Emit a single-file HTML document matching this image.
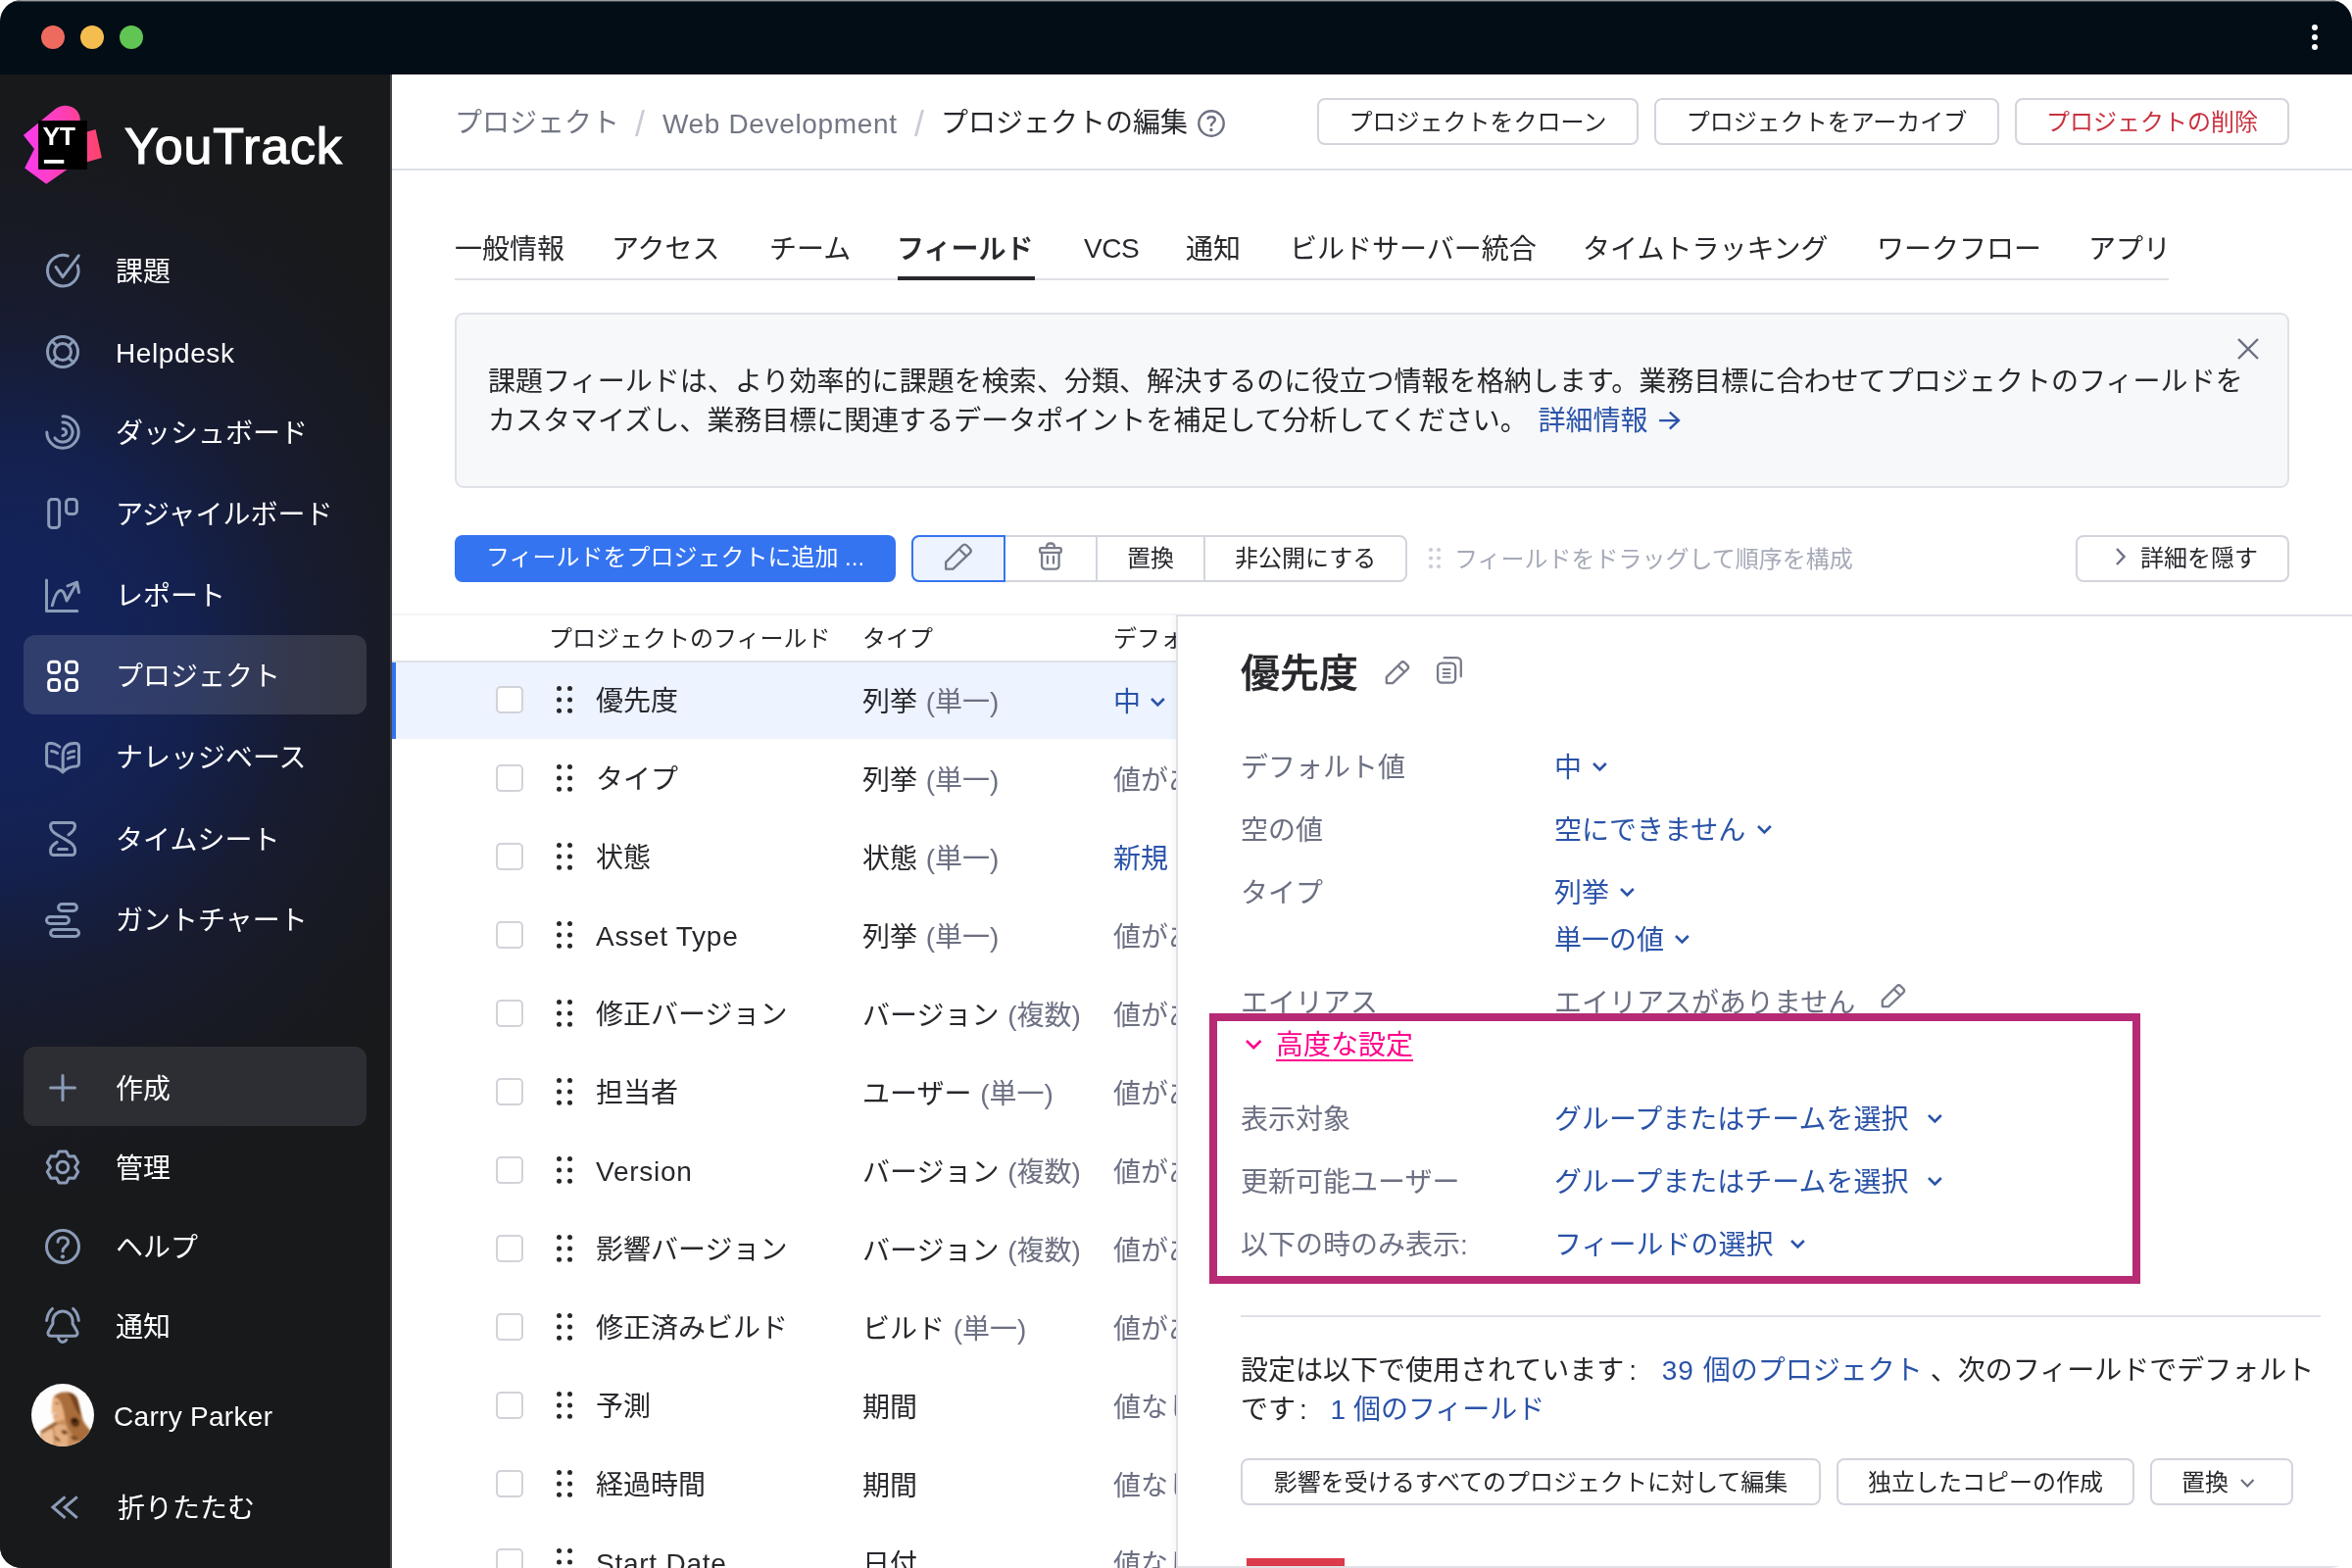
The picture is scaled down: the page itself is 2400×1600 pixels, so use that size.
<!DOCTYPE html>
<html lang="ja"><head><meta charset="utf-8"><title>YouTrack</title>
<style>
html,body{margin:0;padding:0;background:#fff}
body{width:2400px;height:1600px;overflow:hidden;position:relative;font-family:"Liberation Sans","Noto Sans CJK JP",sans-serif;color:#1f2326}
.win{position:absolute;left:0;top:0;width:2400px;height:1600px;border-radius:22px;overflow:hidden;background:#fff;will-change:transform}
.abs{position:absolute;box-sizing:content-box}
.t{position:absolute;white-space:nowrap;line-height:1}
.btn{text-align:center;white-space:nowrap;background:#fff}
svg{overflow:visible}
</style></head><body><div class="win">
<div class="abs" style="left:0;top:0;width:2400px;height:76px;background:#020d16"></div>
<div class="abs" style="left:0;top:0;width:2400px;height:2px;background:linear-gradient(#9a9da0 0,#9a9da0 1px,#3f454b 1px,#3f454b 2px)"></div>
<div class="abs" style="left:42px;top:26px;width:24px;height:24px;border-radius:50%;background:#ee6a5e"></div>
<div class="abs" style="left:82px;top:26px;width:24px;height:24px;border-radius:50%;background:#f5bd4f"></div>
<div class="abs" style="left:122px;top:26px;width:24px;height:24px;border-radius:50%;background:#61c554"></div>
<div class="abs" style="left:2359px;top:25px;width:6px;height:6px;border-radius:50%;background:#fff"></div>
<div class="abs" style="left:2359px;top:35px;width:6px;height:6px;border-radius:50%;background:#fff"></div>
<div class="abs" style="left:2359px;top:45px;width:6px;height:6px;border-radius:50%;background:#fff"></div>
<div class="abs" style="left:0;top:76px;width:398px;height:1524px;background:#18191b"></div>
<div class="abs" style="left:0;top:76px;width:398px;height:1524px;background:radial-gradient(ellipse 520px 560px at 0px 594px,#13235a 0%,#13235a 19%,#14214f 38%,#171c33 58%,#181a24 77%,#18191b 100%)"></div>
<div class="abs" style="left:398px;top:76px;width:2px;height:1524px;background:#45464c"></div>
<svg class="abs" style="left:14px;top:96px" width="100" height="100" viewBox="0 0 100 100" fill="none" ><defs><linearGradient id="lg" x1="10" y1="50" x2="90" y2="50" gradientUnits="userSpaceOnUse"><stop offset="0" stop-color="#fb3cf0"/><stop offset="0.55" stop-color="#fd3fae"/><stop offset="1" stop-color="#ff4468"/></linearGradient></defs>
<path d="M9.9 42.1 L41.5 15.9 Q47.5 11.6 53 11.8 Q60 12 64.5 17 Q67.8 21 67.8 27.1 L39 27.1 Z" fill="url(#lg)"/>
<path d="M9.9 42.1 L40 20 L40 76.8 L54.8 76.8 L33.2 91.8 L11.2 75.6 L21 56.1 Z" fill="url(#lg)"/>
<path d="M74 38.8 L83.5 36 L89.9 65.1 L74 69.5 Z" fill="url(#lg)"/>
<rect x="25.1" y="27.1" width="49.8" height="49.8" fill="#000"/>
<rect x="30.9" y="67" width="20.4" height="3.8" fill="#fff"/>
<text x="29.6" y="52" font-family='"Liberation Sans",sans-serif' font-weight="700" font-size="26.5" fill="#fff" letter-spacing="-0.5">YT</text></svg>
<div class="t" style="left:127px;top:116.5px;font-size:52px;color:#fff;letter-spacing:0.85px;line-height:64px;-webkit-text-stroke:1.2px #fff">YouTrack</div>
<div class="abs" style="left:24px;top:648px;width:350px;height:81px;border-radius:12px;background:rgba(255,255,255,0.125)"></div>
<div class="abs" style="left:24px;top:1068px;width:350px;height:81px;border-radius:12px;background:#2d2e33"></div>
<svg class="abs" style="left:34px;top:246px" width="60" height="60" viewBox="0 0 60 60" fill="none" ><g stroke="#8b9cb8" stroke-width="3" stroke-linecap="round" stroke-linejoin="round"><path d="M45.2 24.9 A15.8 15.8 0 1 1 35.2 15.1"/><path d="M23 26.4 L30 36.7 L46.3 14.9"/></g></svg>
<div class="t" style="left:118px;top:264.4px;font-size:28px;color:#fff;font-weight:400;">課題</div>
<svg class="abs" style="left:34px;top:329px" width="60" height="60" viewBox="0 0 60 60" fill="none" ><g stroke="#8b9cb8" stroke-width="3" stroke-linecap="round" stroke-linejoin="round"><circle cx="30" cy="30" r="15.5"/><circle cx="30" cy="30" r="8.5"/><path d="M19 19 L24 24 M41 19 L36 24 M19 41 L24 36 M41 41 L36 36"/></g></svg>
<div class="t" style="left:118px;top:346.5px;font-size:28px;color:#fff;font-weight:400;letter-spacing:0.6px">Helpdesk</div>
<svg class="abs" style="left:34px;top:411px" width="60" height="60" viewBox="0 0 60 60" fill="none" ><g stroke="#8b9cb8" stroke-width="3" stroke-linecap="round" stroke-linejoin="round"><path d="M30.00 13.80 A16.2 16.2 0 1 1 13.80 30.00"/><path d="M30.00 20.00 A10 10 0 1 1 21.91 35.88"/><path d="M30.00 26.40 A3.6 3.6 0 0 1 30.00 33.60"/></g></svg>
<div class="t" style="left:118px;top:429.4px;font-size:28px;color:#fff;font-weight:400;">ダッシュボード</div>
<svg class="abs" style="left:34px;top:494px" width="60" height="60" viewBox="0 0 60 60" fill="none" ><g stroke="#8b9cb8" stroke-width="3" stroke-linecap="round" stroke-linejoin="round"><rect x="15.7" y="15.5" width="10.9" height="29" rx="3.2"/><rect x="33.6" y="15.5" width="10.8" height="15" rx="3.2"/></g></svg>
<div class="t" style="left:118px;top:512.4px;font-size:28px;color:#fff;font-weight:400;">アジャイルボード</div>
<svg class="abs" style="left:34px;top:577px" width="60" height="60" viewBox="0 0 60 60" fill="none" ><g stroke="#8b9cb8" stroke-width="3" stroke-linecap="round" stroke-linejoin="round"><path d="M13.5 15.1 V46.5 H44.8"/><path d="M19.3 40.8 C22 31 25 25.6 27.9 25.6 C31 25.6 32.5 31 34.1 36 L44.6 17.2"/><path d="M35 20.9 L44.6 17.2 L46.5 27.6"/></g></svg>
<div class="t" style="left:118px;top:595.4px;font-size:28px;color:#fff;font-weight:400;">レポート</div>
<svg class="abs" style="left:34px;top:659px" width="60" height="60" viewBox="0 0 60 60" fill="none" ><g stroke="#fff" stroke-width="3" stroke-linecap="round" stroke-linejoin="round"><rect x="15.7" y="16.2" width="10.9" height="11.2" rx="3.4"/><rect x="15.7" y="34.4" width="10.9" height="11.2" rx="3.4"/><rect x="33.6" y="16.2" width="10.9" height="11.2" rx="3.4"/><rect x="33.6" y="34.4" width="10.9" height="11.2" rx="3.4"/></g></svg>
<div class="t" style="left:118px;top:677.4px;font-size:28px;color:#fff;font-weight:400;">プロジェクト</div>
<svg class="abs" style="left:34px;top:742px" width="60" height="60" viewBox="0 0 60 60" fill="none" ><g stroke="#8b9cb8" stroke-width="3" stroke-linecap="round" stroke-linejoin="round"><path d="M26.8 20.1 C24 18 21.5 16.5 18.4 16.5 H16.6 A3 3 0 0 0 13.6 19.5 V37 A3 3 0 0 0 16.6 40 C21 40 25.5 41.5 30 45.9 C34.5 41.5 39 40 43.5 40 A3 3 0 0 0 46.5 37 V19.5 A3 3 0 0 0 43.5 16.5 H41.6 C34.5 16.5 30.2 21 30.2 27.5 V45"/><path d="M18.6 24.5 C21 24.7 23 25.4 24.5 26.5 M35.4 26.5 C37 25.4 39 24.7 41.6 24.5 M35.4 32.1 C37 31 39 30.4 41.6 30.2"/></g></svg>
<div class="t" style="left:118px;top:760.4px;font-size:28px;color:#fff;font-weight:400;">ナレッジベース</div>
<svg class="abs" style="left:34px;top:825px" width="60" height="60" viewBox="0 0 60 60" fill="none" ><g stroke="#8b9cb8" stroke-width="3" stroke-linecap="round" stroke-linejoin="round"><path d="M36 26.8 C40 24 42.5 21.5 42.5 18 V17.5 A3 3 0 0 0 39.5 14.5 H20.6 A3 3 0 0 0 17.6 17.5 V18 C17.6 24 24 26.5 30 30 C36 33.5 42.5 36.5 42.5 42.5 V44.6 A3 3 0 0 1 39.5 47.6 H20.6 A3 3 0 0 1 17.6 44.6 V42.5 C17.6 39 20 36.8 24.1 34.4"/><path d="M25.6 41.5 H34.4"/></g></svg>
<div class="t" style="left:118px;top:844.4px;font-size:28px;color:#fff;font-weight:400;">タイムシート</div>
<svg class="abs" style="left:34px;top:908px" width="60" height="60" viewBox="0 0 60 60" fill="none" ><g stroke="#8b9cb8" stroke-width="3" stroke-linecap="round" stroke-linejoin="round"><rect x="25.6" y="14.5" width="18.8" height="7" rx="3.5"/><rect x="13.5" y="27.5" width="22.9" height="7" rx="3.5"/><rect x="17.6" y="40.5" width="28.9" height="7" rx="3.5"/></g></svg>
<div class="t" style="left:118px;top:926.4px;font-size:28px;color:#fff;font-weight:400;">ガントチャート</div>
<svg class="abs" style="left:34px;top:1078px" width="60" height="60" viewBox="0 0 60 60" fill="none" ><g stroke="#8b9cb8" stroke-width="3" stroke-linecap="round" stroke-linejoin="round"><path d="M17.6 32 H42.5 M30 19.5 V44.4"/></g></svg>
<div class="t" style="left:118px;top:1097.5px;font-size:28px;color:#fff;font-weight:400;">作成</div>
<svg class="abs" style="left:34px;top:1161px" width="60" height="60" viewBox="0 0 60 60" fill="none" ><g stroke="#8b9cb8" stroke-width="3" stroke-linecap="round" stroke-linejoin="round"><path d="M26.31 14.02 L33.69 14.02 L36.30 19.09 L41.99 18.82 L45.68 25.21 L42.60 30.00 L45.68 34.79 L41.99 41.18 L36.30 40.91 L33.69 45.98 L26.31 45.98 L23.70 40.91 L18.01 41.18 L14.32 34.79 L17.40 30.00 L14.32 25.21 L18.01 18.82 L23.70 19.09 Z"/><circle cx="30" cy="30" r="5.8"/></g></svg>
<div class="t" style="left:118px;top:1179.3px;font-size:28px;color:#fff;font-weight:400;">管理</div>
<svg class="abs" style="left:34px;top:1242px" width="60" height="60" viewBox="0 0 60 60" fill="none" ><g stroke="#8b9cb8" stroke-width="3" stroke-linecap="round" stroke-linejoin="round"><circle cx="30" cy="30" r="16.5"/><path d="M25 25.3 C25 22.5 27 20.7 30 20.7 C33.3 20.7 35.6 22.6 35.6 25.2 C35.6 29.5 30 30 30 34.8"/><circle cx="30" cy="40.3" r="2.1" fill="#8b9cb8" stroke="none"/></g></svg>
<div class="t" style="left:118px;top:1259.9px;font-size:28px;color:#fff;font-weight:400;">ヘルプ</div>
<svg class="abs" style="left:34px;top:1322px" width="60" height="60" viewBox="0 0 60 60" fill="none" ><g stroke="#8b9cb8" stroke-width="3" stroke-linecap="round" stroke-linejoin="round"><path d="M19.9 28.7 V26 A10.1 10.1 0 0 1 40.1 26 V28.7 L44.6 36.6 A3 3 0 0 1 42 41.3 H18 A3 3 0 0 1 15.4 36.6 Z"/><path d="M25.3 42.5 C26 45.5 27.5 47.4 30 47.4 C31.8 47.4 33 46.6 33.7 45.2"/><path d="M13.6 25.4 C14.2 20.5 16 16.5 19.5 13.4 M40.6 13.4 C44 16.5 45.8 20.5 46.3 25.4"/></g></svg>
<div class="t" style="left:118px;top:1340.6px;font-size:28px;color:#fff;font-weight:400;">通知</div>
<svg class="abs" style="left:34px;top:1508px" width="60" height="60" viewBox="0 0 60 60" fill="none" ><g stroke="#8b9cb8" stroke-width="3" stroke-linecap="round" stroke-linejoin="round"><path d="M32.5 19.3 L19.9 30 L32.5 40.8 M44.8 19.3 L32.1 30 L44.8 40.8" stroke-linecap="butt" stroke-linejoin="miter"/></g></svg>
<div class="t" style="left:120px;top:1525.9px;font-size:28px;color:#fff;font-weight:400;">折りたたむ</div>
<svg class="abs" style="left:32px;top:1412px" width="64" height="64" viewBox="0 0 64 64" fill="none" ><defs><clipPath id="avc"><circle cx="32" cy="32" r="32"/></clipPath><filter id="avb" x="-10%" y="-10%" width="120%" height="120%"><feGaussianBlur stdDeviation="0.9"/></filter></defs>
<g clip-path="url(#avc)"><rect width="64" height="64" fill="#fefdfd"/>
<g filter="url(#avb)">
<path d="M9 48.5 C14 45 20 41.5 24 38.5 L30 36 L50 34 C54 40 58 45 61 48.5 L62 66 L10 66 Z" fill="#c98f5c"/>
<path d="M10.5 49 C13 47.5 17 46 21 46 C23 50 23 58 22.5 66 L12 66 Z" fill="#ecbd93"/>
<path d="M23 44 C27 41 31 41 35 43 C37 48 38 56 37 66 L24 66 C25 58 25 50 23 44 Z" fill="#e3ad80"/>
<path d="M22.4 14 C21 18 20.5 24 21 28 L20.3 30 L22.5 31.5 L22 35 C23 37.8 25 38.8 27.5 38.6 L35 36 L37 14 Z" fill="#e9b182"/>
<path d="M22.4 14 C26 9.5 31 8.2 36 8.6 C42 9 46 12 47.5 17 C50 25 51 32 53 38 C55 43 58.5 46 61 48.5 L57 60 C50 61 44 56 40.5 50 C37 44 34.5 38 33.5 32 C32.5 25 30.5 19 27.5 15.8 C26 14.2 24 13.8 22.4 14 Z" fill="#a96d3b"/>
<path d="M36 8.8 C42 9 46 12 47.5 17 C49 23 50 28 50.8 33 C47 30 44 24 42 18 C40.5 14 38.5 11 36 8.8 Z" fill="#74431d"/>
<path d="M40 36 C43 33 47 34 49 38 C50 42 47 45 44 44 C41 43 39 39 40 36 Z" fill="#5a3114"/>
<ellipse cx="44.3" cy="37.4" rx="2.3" ry="1.7" fill="#1d0d04"/>
<path d="M24.5 39 C19.5 42 14.5 45 9.5 48.5 L12 50.5 C17 47.5 22.5 44.5 27 41 Z" fill="#9b6537"/>
<path d="M30 48 C33 46 36 47 37 50 C36 53 32 53 30 48 Z M40 54 C43 52 47 53 48 57 C45 59 41 58 40 54 Z M23 53 C26 54 29 56 30 59 C27 59 24 57 23 53 Z" fill="#7f4d24"/>
<ellipse cx="26.2" cy="20" rx="1.5" ry="0.9" fill="#6b3d1c"/>
<path d="M22.5 30 L26 30.2 L25.5 31.6 L22.8 31.4 Z" fill="#fff"/><path d="M23 31.6 L26 31.6 L25 32.8 Z" fill="#6b3218"/>
</g></g></svg>
<div class="t" style="left:116px;top:1431.5px;font-size:28px;color:#fff;font-weight:400;letter-spacing:0.3px">Carry Parker</div>
<div class="t" style="left:464px;top:111.9px;font-size:28px;color:#737785;font-weight:400;">プロジェクト</div>
<div class="t" style="left:648px;top:109.0px;font-size:36px;color:#c9ccd5;font-weight:400;">/</div>
<div class="t" style="left:676px;top:113.0px;font-size:28px;color:#737785;font-weight:400;letter-spacing:0.65px">Web Development</div>
<div class="t" style="left:933px;top:109.0px;font-size:36px;color:#c9ccd5;font-weight:400;">/</div>
<div class="t" style="left:960px;top:111.9px;font-size:28px;color:#27282c;font-weight:400;">プロジェクトの編集</div>
<svg class="abs" style="left:1221px;top:111px" width="30" height="30" viewBox="0 0 30 30" fill="none" ><g stroke="#6c7082" stroke-width="2.4" stroke-linecap="round" stroke-linejoin="round"><circle cx="15" cy="15" r="12.7"/><path d="M11.6 9.9 C12 8.8 13.3 8.3 15 8.3 C17.4 8.3 18.8 9.6 18.8 11.3 C18.8 13.9 15 14.3 15 16.9"/><circle cx="14.9" cy="21.5" r="1.7" fill="#6c7082" stroke="none"/></g></svg>
<div class="abs btn" style="left:1344px;top:100px;width:324px;height:44px;border:2px solid #d3d5dd;border-radius:8px;font-size:24px;color:#27282c;line-height:46px;">プロジェクトをクローン</div>
<div class="abs btn" style="left:1688px;top:100px;width:348px;height:44px;border:2px solid #d3d5dd;border-radius:8px;font-size:24px;color:#27282c;line-height:46px;">プロジェクトをアーカイブ</div>
<div class="abs btn" style="left:2056px;top:100px;width:276px;height:44px;border:2px solid #d3d5dd;border-radius:8px;font-size:24px;color:#c8323f;line-height:46px;">プロジェクトの削除</div>
<div class="abs" style="left:400px;top:172px;width:2000px;height:2px;background:#dfe1e7"></div>
<div class="t" style="left:464px;top:240.9px;font-size:28px;color:#27282c;font-weight:400;">一般情報</div>
<div class="t" style="left:624px;top:240.9px;font-size:28px;color:#27282c;font-weight:400;">アクセス</div>
<div class="t" style="left:785px;top:240.9px;font-size:28px;color:#27282c;font-weight:400;">チーム</div>
<div class="t" style="left:915px;top:240.9px;font-size:28px;color:#27282c;font-weight:500;-webkit-text-stroke:0.35px #27282c">フィールド</div>
<div class="t" style="left:1105px;top:240.0px;font-size:28px;color:#27282c;font-weight:400;letter-spacing:-0.5px;margin-left:1px">VCS</div>
<div class="t" style="left:1210px;top:240.9px;font-size:28px;color:#27282c;font-weight:400;">通知</div>
<div class="t" style="left:1316px;top:240.9px;font-size:28px;color:#27282c;font-weight:400;">ビルドサーバー統合</div>
<div class="t" style="left:1615px;top:240.9px;font-size:28px;color:#27282c;font-weight:400;">タイムトラッキング</div>
<div class="t" style="left:1915px;top:240.9px;font-size:28px;color:#27282c;font-weight:400;">ワークフロー</div>
<div class="t" style="left:2131px;top:240.9px;font-size:28px;color:#27282c;font-weight:400;">アプリ</div>
<div class="abs" style="left:464px;top:284px;width:1749px;height:2px;background:#dfe1e7"></div>
<div class="abs" style="left:916px;top:282px;width:140px;height:4px;background:#27282c"></div>
<div class="abs" style="left:464px;top:319px;width:1868px;height:175px;border:2px solid #dfe1e7;border-radius:9px;background:#f7f8fa"></div>
<div class="t" style="left:498px;top:375.8px;font-size:28px;color:#27282c;font-weight:400;"><span style="letter-spacing:0.05px">課題フィールドは、より効率的に課題を検索、分類、解決するのに役立つ情報を格納します。業務目標に合わせてプロジェクトのフィールドを</span></div>
<div class="t" style="left:498px;top:415.8px;font-size:28px;color:#27282c;font-weight:400;">カスタマイズし、業務目標に関連するデータポイントを補足して分析してください。 <span style="color:#2a53a8;margin-left:3px">詳細情報</span></div>
<svg class="abs" style="left:1690px;top:418px" width="26" height="22" viewBox="0 0 26 22" fill="none" ><path d="M3.1 11.1 H22.6 M13.8 2.7 L23 11.1 L13.8 19.5" stroke="#2a53a8" stroke-width="2.4" stroke-linejoin="miter"/></svg>
<svg class="abs" style="left:2280px;top:342px" width="28" height="28" viewBox="0 0 28 28" fill="none" ><path d="M4 4 L24 24 M24 4 L4 24" stroke="#6c7082" stroke-width="2.4"/></svg>
<div class="abs btn" style="left:464px;top:546px;width:450px;height:48px;border-radius:8px;background:#3574f0;color:#fff;font-size:24px;line-height:46px">フィールドをプロジェクトに追加 ...</div>
<div class="abs" style="left:930px;top:546px;width:502px;height:44px;border:2px solid #d3d5dd;border-radius:8px;background:#fff"></div>
<div class="abs" style="left:930px;top:546px;width:92px;height:44px;border:2px solid #3574f0;border-radius:8px 0 0 8px;background:#edf3ff"></div>
<div class="abs" style="left:1118px;top:548px;width:2px;height:44px;background:#d3d5dd"></div>
<div class="abs" style="left:1228px;top:548px;width:2px;height:44px;background:#d3d5dd"></div>
<svg class="abs" style="left:962px;top:552px" width="32" height="32" viewBox="0 0 32 32" fill="none" ><g transform="scale(1.0)" stroke="#737887" stroke-width="2.30" stroke-linejoin="round" stroke-linecap="round"><path d="M3.2 21.6 L20 4.8 Q22.3 2.5 24.6 4.8 L27.6 7.8 Q29.9 10.1 27.6 12.4 L10.4 28.7 H3.2 Z"/><path d="M17.4 9 L23.7 15.1"/></g></svg>
<svg class="abs" style="left:1058px;top:552px" width="28" height="32" viewBox="0 0 28 32" fill="none" ><g stroke="#787c8b" stroke-width="2.3" stroke-linecap="round" stroke-linejoin="round"><rect x="3.1" y="7.2" width="21.7" height="4.7" rx="1.2"/><path d="M10.1 7 V5.6 A3.1 3.1 0 0 1 13.2 2.5 H14.8 A3.1 3.1 0 0 1 17.9 5.6 V7"/><path d="M5.1 12 V25.2 A3.5 3.5 0 0 0 8.6 28.7 H19.1 A3.5 3.5 0 0 0 22.6 25.2 V12"/><path d="M10.9 15.8 V22.7 M17 15.8 V22.7"/></g></svg>
<div class="t" style="left:1150px;top:558.3px;font-size:24px;color:#27282c;font-weight:400;">置換</div>
<div class="t" style="left:1260px;top:558.3px;font-size:24px;color:#27282c;font-weight:400;">非公開にする</div>
<svg class="abs" style="left:1457px;top:558px" width="14" height="24" viewBox="0 0 14 24" fill="none" ><circle cx="3" cy="3" r="2.1" fill="#c9ccd6"/><circle cx="3" cy="11.5" r="2.1" fill="#c9ccd6"/><circle cx="3" cy="20" r="2.1" fill="#c9ccd6"/><circle cx="11" cy="3" r="2.1" fill="#c9ccd6"/><circle cx="11" cy="11.5" r="2.1" fill="#c9ccd6"/><circle cx="11" cy="20" r="2.1" fill="#c9ccd6"/></svg>
<div class="t" style="left:1484px;top:558.8px;font-size:24px;color:#a6aab8;font-weight:400;">フィールドをドラッグして順序を構成</div>
<div class="abs btn" style="left:2118px;top:546px;width:214px;height:44px;border:2px solid #d3d5dd;border-radius:8px;font-size:24px;color:#27282c;line-height:46px;"></div>
<svg class="abs" style="left:2157px;top:557px" width="14" height="22" viewBox="0 0 14 22" fill="none" ><path d="M3 3 L10.5 11 L3 19" stroke="#6c7082" stroke-width="2.4"/></svg>
<div class="t" style="left:2184px;top:558.1px;font-size:24px;color:#27282c;font-weight:400;">詳細を隠す</div>
<div class="abs" style="left:400px;top:626px;width:800px;height:2px;background:#f3f4f6"></div>
<div class="t" style="left:560px;top:639.8px;font-size:24px;color:#27282c;font-weight:400;">プロジェクトのフィールド</div>
<div class="t" style="left:880px;top:639.8px;font-size:24px;color:#27282c;font-weight:400;">タイプ</div>
<div class="t" style="left:1136px;top:639.8px;font-size:24px;color:#27282c;font-weight:400;">デフォルト</div>
<div class="abs" style="left:400px;top:674px;width:800px;height:2px;background:#dfe1e7"></div>
<div class="abs" style="left:400px;top:676px;width:800px;height:78px;background:#edf3ff"></div>
<div class="abs" style="left:400px;top:676px;width:4px;height:78px;background:#3574f0"></div>
<div class="abs" style="left:506px;top:700.0px;width:24px;height:24px;border:2px solid #d1d3d9;border-radius:5px;background:#fff"></div>
<svg class="abs" style="left:568px;top:700.0px" width="17" height="28" viewBox="0 0 17 28" fill="none" ><circle cx="2.5" cy="2.4" r="2.5" fill="#27282c"/><circle cx="2.5" cy="13.9" r="2.5" fill="#27282c"/><circle cx="2.5" cy="25.3" r="2.5" fill="#27282c"/><circle cx="13.5" cy="2.4" r="2.5" fill="#27282c"/><circle cx="13.5" cy="13.9" r="2.5" fill="#27282c"/><circle cx="13.5" cy="25.3" r="2.5" fill="#27282c"/></svg>
<div class="t" style="left:608px;top:702.4px;font-size:28px;color:#27282c;font-weight:400;">優先度</div>
<div class="t" style="left:880px;top:703.4px;font-size:28px;color:#27282c;font-weight:400;">列挙 <span style="color:#6c7082;margin-left:1px">(単一)</span></div>
<div class="abs" style="left:1130px;top:684.5px;width:70px;height:60px;overflow:hidden"><div class="t" style="left:6px;top:18.9px;font-size:28px;color:#2a53a8;font-weight:400;">中</div></div>
<div class="abs" style="left:506px;top:780.0px;width:24px;height:24px;border:2px solid #d1d3d9;border-radius:5px;background:#fff"></div>
<svg class="abs" style="left:568px;top:780.0px" width="17" height="28" viewBox="0 0 17 28" fill="none" ><circle cx="2.5" cy="2.4" r="2.5" fill="#27282c"/><circle cx="2.5" cy="13.9" r="2.5" fill="#27282c"/><circle cx="2.5" cy="25.3" r="2.5" fill="#27282c"/><circle cx="13.5" cy="2.4" r="2.5" fill="#27282c"/><circle cx="13.5" cy="13.9" r="2.5" fill="#27282c"/><circle cx="13.5" cy="25.3" r="2.5" fill="#27282c"/></svg>
<div class="t" style="left:608px;top:782.4px;font-size:28px;color:#27282c;font-weight:400;">タイプ</div>
<div class="t" style="left:880px;top:783.4px;font-size:28px;color:#27282c;font-weight:400;">列挙 <span style="color:#6c7082;margin-left:1px">(単一)</span></div>
<div class="abs" style="left:1130px;top:764.5px;width:70px;height:60px;overflow:hidden"><div class="t" style="left:6px;top:18.9px;font-size:28px;color:#6c7082;font-weight:400;">値がありません</div></div>
<div class="abs" style="left:506px;top:860.0px;width:24px;height:24px;border:2px solid #d1d3d9;border-radius:5px;background:#fff"></div>
<svg class="abs" style="left:568px;top:860.0px" width="17" height="28" viewBox="0 0 17 28" fill="none" ><circle cx="2.5" cy="2.4" r="2.5" fill="#27282c"/><circle cx="2.5" cy="13.9" r="2.5" fill="#27282c"/><circle cx="2.5" cy="25.3" r="2.5" fill="#27282c"/><circle cx="13.5" cy="2.4" r="2.5" fill="#27282c"/><circle cx="13.5" cy="13.9" r="2.5" fill="#27282c"/><circle cx="13.5" cy="25.3" r="2.5" fill="#27282c"/></svg>
<div class="t" style="left:608px;top:862.4px;font-size:28px;color:#27282c;font-weight:400;">状態</div>
<div class="t" style="left:880px;top:863.4px;font-size:28px;color:#27282c;font-weight:400;">状態 <span style="color:#6c7082;margin-left:1px">(単一)</span></div>
<div class="abs" style="left:1130px;top:844.5px;width:70px;height:60px;overflow:hidden"><div class="t" style="left:6px;top:18.9px;font-size:28px;color:#2a53a8;font-weight:400;">新規</div></div>
<div class="abs" style="left:506px;top:940.0px;width:24px;height:24px;border:2px solid #d1d3d9;border-radius:5px;background:#fff"></div>
<svg class="abs" style="left:568px;top:940.0px" width="17" height="28" viewBox="0 0 17 28" fill="none" ><circle cx="2.5" cy="2.4" r="2.5" fill="#27282c"/><circle cx="2.5" cy="13.9" r="2.5" fill="#27282c"/><circle cx="2.5" cy="25.3" r="2.5" fill="#27282c"/><circle cx="13.5" cy="2.4" r="2.5" fill="#27282c"/><circle cx="13.5" cy="13.9" r="2.5" fill="#27282c"/><circle cx="13.5" cy="25.3" r="2.5" fill="#27282c"/></svg>
<div class="t" style="left:608px;top:941.5px;font-size:28px;color:#27282c;font-weight:400;letter-spacing:0.75px">Asset Type</div>
<div class="t" style="left:880px;top:943.4px;font-size:28px;color:#27282c;font-weight:400;">列挙 <span style="color:#6c7082;margin-left:1px">(単一)</span></div>
<div class="abs" style="left:1130px;top:924.5px;width:70px;height:60px;overflow:hidden"><div class="t" style="left:6px;top:18.9px;font-size:28px;color:#6c7082;font-weight:400;">値がありません</div></div>
<div class="abs" style="left:506px;top:1020.0px;width:24px;height:24px;border:2px solid #d1d3d9;border-radius:5px;background:#fff"></div>
<svg class="abs" style="left:568px;top:1020.0px" width="17" height="28" viewBox="0 0 17 28" fill="none" ><circle cx="2.5" cy="2.4" r="2.5" fill="#27282c"/><circle cx="2.5" cy="13.9" r="2.5" fill="#27282c"/><circle cx="2.5" cy="25.3" r="2.5" fill="#27282c"/><circle cx="13.5" cy="2.4" r="2.5" fill="#27282c"/><circle cx="13.5" cy="13.9" r="2.5" fill="#27282c"/><circle cx="13.5" cy="25.3" r="2.5" fill="#27282c"/></svg>
<div class="t" style="left:608px;top:1022.4px;font-size:28px;color:#27282c;font-weight:400;">修正バージョン</div>
<div class="t" style="left:880px;top:1023.4px;font-size:28px;color:#27282c;font-weight:400;">バージョン <span style="color:#6c7082;margin-left:1px">(複数)</span></div>
<div class="abs" style="left:1130px;top:1004.5px;width:70px;height:60px;overflow:hidden"><div class="t" style="left:6px;top:18.9px;font-size:28px;color:#6c7082;font-weight:400;">値がありません</div></div>
<div class="abs" style="left:506px;top:1100.0px;width:24px;height:24px;border:2px solid #d1d3d9;border-radius:5px;background:#fff"></div>
<svg class="abs" style="left:568px;top:1100.0px" width="17" height="28" viewBox="0 0 17 28" fill="none" ><circle cx="2.5" cy="2.4" r="2.5" fill="#27282c"/><circle cx="2.5" cy="13.9" r="2.5" fill="#27282c"/><circle cx="2.5" cy="25.3" r="2.5" fill="#27282c"/><circle cx="13.5" cy="2.4" r="2.5" fill="#27282c"/><circle cx="13.5" cy="13.9" r="2.5" fill="#27282c"/><circle cx="13.5" cy="25.3" r="2.5" fill="#27282c"/></svg>
<div class="t" style="left:608px;top:1102.4px;font-size:28px;color:#27282c;font-weight:400;">担当者</div>
<div class="t" style="left:880px;top:1103.4px;font-size:28px;color:#27282c;font-weight:400;">ユーザー <span style="color:#6c7082;margin-left:1px">(単一)</span></div>
<div class="abs" style="left:1130px;top:1084.5px;width:70px;height:60px;overflow:hidden"><div class="t" style="left:6px;top:18.9px;font-size:28px;color:#6c7082;font-weight:400;">値がありません</div></div>
<div class="abs" style="left:506px;top:1180.0px;width:24px;height:24px;border:2px solid #d1d3d9;border-radius:5px;background:#fff"></div>
<svg class="abs" style="left:568px;top:1180.0px" width="17" height="28" viewBox="0 0 17 28" fill="none" ><circle cx="2.5" cy="2.4" r="2.5" fill="#27282c"/><circle cx="2.5" cy="13.9" r="2.5" fill="#27282c"/><circle cx="2.5" cy="25.3" r="2.5" fill="#27282c"/><circle cx="13.5" cy="2.4" r="2.5" fill="#27282c"/><circle cx="13.5" cy="13.9" r="2.5" fill="#27282c"/><circle cx="13.5" cy="25.3" r="2.5" fill="#27282c"/></svg>
<div class="t" style="left:608px;top:1181.5px;font-size:28px;color:#27282c;font-weight:400;letter-spacing:0.75px">Version</div>
<div class="t" style="left:880px;top:1183.4px;font-size:28px;color:#27282c;font-weight:400;">バージョン <span style="color:#6c7082;margin-left:1px">(複数)</span></div>
<div class="abs" style="left:1130px;top:1164.5px;width:70px;height:60px;overflow:hidden"><div class="t" style="left:6px;top:18.9px;font-size:28px;color:#6c7082;font-weight:400;">値がありません</div></div>
<div class="abs" style="left:506px;top:1260.0px;width:24px;height:24px;border:2px solid #d1d3d9;border-radius:5px;background:#fff"></div>
<svg class="abs" style="left:568px;top:1260.0px" width="17" height="28" viewBox="0 0 17 28" fill="none" ><circle cx="2.5" cy="2.4" r="2.5" fill="#27282c"/><circle cx="2.5" cy="13.9" r="2.5" fill="#27282c"/><circle cx="2.5" cy="25.3" r="2.5" fill="#27282c"/><circle cx="13.5" cy="2.4" r="2.5" fill="#27282c"/><circle cx="13.5" cy="13.9" r="2.5" fill="#27282c"/><circle cx="13.5" cy="25.3" r="2.5" fill="#27282c"/></svg>
<div class="t" style="left:608px;top:1262.4px;font-size:28px;color:#27282c;font-weight:400;">影響バージョン</div>
<div class="t" style="left:880px;top:1263.4px;font-size:28px;color:#27282c;font-weight:400;">バージョン <span style="color:#6c7082;margin-left:1px">(複数)</span></div>
<div class="abs" style="left:1130px;top:1244.5px;width:70px;height:60px;overflow:hidden"><div class="t" style="left:6px;top:18.9px;font-size:28px;color:#6c7082;font-weight:400;">値がありません</div></div>
<div class="abs" style="left:506px;top:1340.0px;width:24px;height:24px;border:2px solid #d1d3d9;border-radius:5px;background:#fff"></div>
<svg class="abs" style="left:568px;top:1340.0px" width="17" height="28" viewBox="0 0 17 28" fill="none" ><circle cx="2.5" cy="2.4" r="2.5" fill="#27282c"/><circle cx="2.5" cy="13.9" r="2.5" fill="#27282c"/><circle cx="2.5" cy="25.3" r="2.5" fill="#27282c"/><circle cx="13.5" cy="2.4" r="2.5" fill="#27282c"/><circle cx="13.5" cy="13.9" r="2.5" fill="#27282c"/><circle cx="13.5" cy="25.3" r="2.5" fill="#27282c"/></svg>
<div class="t" style="left:608px;top:1342.4px;font-size:28px;color:#27282c;font-weight:400;">修正済みビルド</div>
<div class="t" style="left:880px;top:1343.4px;font-size:28px;color:#27282c;font-weight:400;">ビルド <span style="color:#6c7082;margin-left:1px">(単一)</span></div>
<div class="abs" style="left:1130px;top:1324.5px;width:70px;height:60px;overflow:hidden"><div class="t" style="left:6px;top:18.9px;font-size:28px;color:#6c7082;font-weight:400;">値がありません</div></div>
<div class="abs" style="left:506px;top:1420.0px;width:24px;height:24px;border:2px solid #d1d3d9;border-radius:5px;background:#fff"></div>
<svg class="abs" style="left:568px;top:1420.0px" width="17" height="28" viewBox="0 0 17 28" fill="none" ><circle cx="2.5" cy="2.4" r="2.5" fill="#27282c"/><circle cx="2.5" cy="13.9" r="2.5" fill="#27282c"/><circle cx="2.5" cy="25.3" r="2.5" fill="#27282c"/><circle cx="13.5" cy="2.4" r="2.5" fill="#27282c"/><circle cx="13.5" cy="13.9" r="2.5" fill="#27282c"/><circle cx="13.5" cy="25.3" r="2.5" fill="#27282c"/></svg>
<div class="t" style="left:608px;top:1422.4px;font-size:28px;color:#27282c;font-weight:400;">予測</div>
<div class="t" style="left:880px;top:1423.4px;font-size:28px;color:#27282c;font-weight:400;">期間</div>
<div class="abs" style="left:1130px;top:1404.5px;width:70px;height:60px;overflow:hidden"><div class="t" style="left:6px;top:18.9px;font-size:28px;color:#6c7082;font-weight:400;">値なし</div></div>
<div class="abs" style="left:506px;top:1500.0px;width:24px;height:24px;border:2px solid #d1d3d9;border-radius:5px;background:#fff"></div>
<svg class="abs" style="left:568px;top:1500.0px" width="17" height="28" viewBox="0 0 17 28" fill="none" ><circle cx="2.5" cy="2.4" r="2.5" fill="#27282c"/><circle cx="2.5" cy="13.9" r="2.5" fill="#27282c"/><circle cx="2.5" cy="25.3" r="2.5" fill="#27282c"/><circle cx="13.5" cy="2.4" r="2.5" fill="#27282c"/><circle cx="13.5" cy="13.9" r="2.5" fill="#27282c"/><circle cx="13.5" cy="25.3" r="2.5" fill="#27282c"/></svg>
<div class="t" style="left:608px;top:1502.4px;font-size:28px;color:#27282c;font-weight:400;">経過時間</div>
<div class="t" style="left:880px;top:1503.4px;font-size:28px;color:#27282c;font-weight:400;">期間</div>
<div class="abs" style="left:1130px;top:1484.5px;width:70px;height:60px;overflow:hidden"><div class="t" style="left:6px;top:18.9px;font-size:28px;color:#6c7082;font-weight:400;">値なし</div></div>
<div class="abs" style="left:506px;top:1580.0px;width:24px;height:24px;border:2px solid #d1d3d9;border-radius:5px;background:#fff"></div>
<svg class="abs" style="left:568px;top:1580.0px" width="17" height="28" viewBox="0 0 17 28" fill="none" ><circle cx="2.5" cy="2.4" r="2.5" fill="#27282c"/><circle cx="2.5" cy="13.9" r="2.5" fill="#27282c"/><circle cx="2.5" cy="25.3" r="2.5" fill="#27282c"/><circle cx="13.5" cy="2.4" r="2.5" fill="#27282c"/><circle cx="13.5" cy="13.9" r="2.5" fill="#27282c"/><circle cx="13.5" cy="25.3" r="2.5" fill="#27282c"/></svg>
<div class="t" style="left:608px;top:1581.5px;font-size:28px;color:#27282c;font-weight:400;letter-spacing:0.75px">Start Date</div>
<div class="t" style="left:880px;top:1583.4px;font-size:28px;color:#27282c;font-weight:400;">日付</div>
<div class="abs" style="left:1130px;top:1564.5px;width:70px;height:60px;overflow:hidden"><div class="t" style="left:6px;top:18.9px;font-size:28px;color:#6c7082;font-weight:400;">値なし</div></div>
<svg class="abs" style="left:1173px;top:710.8px" width="16.8" height="10.4" viewBox="0 0 16.8 10.4" fill="none" ><path d="M2 2 L8.4 8.4 L14.8 2" stroke="#2a53a8" stroke-width="2.6" stroke-linecap="butt" stroke-linejoin="miter"/></svg>
<div class="abs" style="left:1200px;top:627px;width:1200px;height:973px;background:#fff;border-left:2px solid #dfe1e7;border-top:2px solid #dfe1e7;box-shadow:-3px 0 6px rgba(0,0,0,0.04)"></div>
<div class="t" style="left:1266px;top:667.3px;font-size:40px;color:#27282c;font-weight:500;-webkit-text-stroke:0.4px #27282c">優先度</div>
<svg class="abs" style="left:1412px;top:671.9px" width="28" height="28" viewBox="0 0 28 28" fill="none" ><g transform="scale(0.875)" stroke="#787c8b" stroke-width="2.63" stroke-linejoin="round" stroke-linecap="round"><path d="M3.2 21.6 L20 4.8 Q22.3 2.5 24.6 4.8 L27.6 7.8 Q29.9 10.1 27.6 12.4 L10.4 28.7 H3.2 Z"/><path d="M17.4 9 L23.7 15.1"/></g></svg>
<svg class="abs" style="left:1464px;top:668px" width="30" height="32" viewBox="0 0 30 32" fill="none" ><g stroke="#787c8b" stroke-width="2.3" stroke-linejoin="round" stroke-linecap="round"><rect x="3.1" y="8.6" width="18" height="20" rx="4"/><path d="M9.7 3.2 H22.8 A4 4 0 0 1 26.8 7.2 V22.3"/><path d="M8.7 14.9 H15.5 M8.7 18.9 H15.5 M8.7 22.8 H15.5" stroke-width="2"/></g></svg>
<div class="t" style="left:1266px;top:769.9px;font-size:28px;color:#6c7082;font-weight:400;">デフォルト値</div><div class="t" style="left:1586px;top:769.9px;font-size:28px;color:#2a53a8">中</div>
<svg class="abs" style="left:1623.5px;top:777px" width="16.8" height="10.4" viewBox="0 0 16.8 10.4" fill="none" ><path d="M2 2 L8.4 8.4 L14.8 2" stroke="#2a53a8" stroke-width="2.6" stroke-linecap="butt" stroke-linejoin="miter"/></svg>
<div class="t" style="left:1266px;top:833.9px;font-size:28px;color:#6c7082;font-weight:400;">空の値</div><div class="t" style="left:1586px;top:833.9px;font-size:28px;color:#2a53a8">空にできません</div>
<svg class="abs" style="left:1791.5px;top:841px" width="16.8" height="10.4" viewBox="0 0 16.8 10.4" fill="none" ><path d="M2 2 L8.4 8.4 L14.8 2" stroke="#2a53a8" stroke-width="2.6" stroke-linecap="butt" stroke-linejoin="miter"/></svg>
<div class="t" style="left:1266px;top:897.9px;font-size:28px;color:#6c7082;font-weight:400;">タイプ</div><div class="t" style="left:1586px;top:897.9px;font-size:28px;color:#2a53a8">列挙</div>
<svg class="abs" style="left:1651.5px;top:905px" width="16.8" height="10.4" viewBox="0 0 16.8 10.4" fill="none" ><path d="M2 2 L8.4 8.4 L14.8 2" stroke="#2a53a8" stroke-width="2.6" stroke-linecap="butt" stroke-linejoin="miter"/></svg>
<div class="t" style="left:1586px;top:945.9px;font-size:28px;color:#2a53a8;font-weight:400;">単一の値</div>
<svg class="abs" style="left:1707.5px;top:953px" width="16.8" height="10.4" viewBox="0 0 16.8 10.4" fill="none" ><path d="M2 2 L8.4 8.4 L14.8 2" stroke="#2a53a8" stroke-width="2.6" stroke-linecap="butt" stroke-linejoin="miter"/></svg>
<div class="t" style="left:1266px;top:1009.9px;font-size:28px;color:#6c7082;font-weight:400;">エイリアス</div><div class="t" style="left:1586px;top:1009.9px;font-size:28px;color:#6c7082">エイリアスがありません</div>
<svg class="abs" style="left:1918.1px;top:1001.9px" width="28" height="28" viewBox="0 0 28 28" fill="none" ><g transform="scale(0.875)" stroke="#787c8b" stroke-width="2.63" stroke-linejoin="round" stroke-linecap="round"><path d="M3.2 21.6 L20 4.8 Q22.3 2.5 24.6 4.8 L27.6 7.8 Q29.9 10.1 27.6 12.4 L10.4 28.7 H3.2 Z"/><path d="M17.4 9 L23.7 15.1"/></g></svg>
<div class="abs" style="left:1234px;top:1034px;width:934px;height:260px;border:8px solid #b72a74;background:#fff"></div>
<svg class="abs" style="left:1270px;top:1059.5px" width="18.5" height="11.2" viewBox="0 0 18.5 11.2" fill="none" ><path d="M2 2 L9.25 9.2 L16.5 2" stroke="#ff008c" stroke-width="2.6" stroke-linecap="butt" stroke-linejoin="miter"/></svg>
<div class="t" style="left:1302px;top:1052.9px;font-size:28px;color:#ff008c;font-weight:400;text-decoration:underline;text-decoration-thickness:2px;text-underline-offset:5px">高度な設定</div>
<div class="t" style="left:1266px;top:1128.9px;font-size:28px;color:#6c7082;font-weight:400;">表示対象</div><div class="t" style="left:1586px;top:1128.9px;font-size:28px;color:#2a53a8">グループまたはチームを選択</div>
<svg class="abs" style="left:1965.5px;top:1136px" width="16.8" height="10.4" viewBox="0 0 16.8 10.4" fill="none" ><path d="M2 2 L8.4 8.4 L14.8 2" stroke="#2a53a8" stroke-width="2.6" stroke-linecap="butt" stroke-linejoin="miter"/></svg>
<div class="t" style="left:1266px;top:1192.9px;font-size:28px;color:#6c7082;font-weight:400;">更新可能ユーザー</div><div class="t" style="left:1586px;top:1192.9px;font-size:28px;color:#2a53a8">グループまたはチームを選択</div>
<svg class="abs" style="left:1965.5px;top:1200px" width="16.8" height="10.4" viewBox="0 0 16.8 10.4" fill="none" ><path d="M2 2 L8.4 8.4 L14.8 2" stroke="#2a53a8" stroke-width="2.6" stroke-linecap="butt" stroke-linejoin="miter"/></svg>
<div class="t" style="left:1266px;top:1256.9px;font-size:28px;color:#6c7082;font-weight:400;">以下の時のみ表示:</div><div class="t" style="left:1586px;top:1256.9px;font-size:28px;color:#2a53a8">フィールドの選択</div>
<svg class="abs" style="left:1825.5px;top:1264px" width="16.8" height="10.4" viewBox="0 0 16.8 10.4" fill="none" ><path d="M2 2 L8.4 8.4 L14.8 2" stroke="#2a53a8" stroke-width="2.6" stroke-linecap="butt" stroke-linejoin="miter"/></svg>
<div class="abs" style="left:1266px;top:1342px;width:1102px;height:2px;background:#dfe1e7"></div>
<div class="t" style="left:1266px;top:1384.9px;font-size:28px;color:#27282c;font-weight:400;">設定は以下で使用されています<span style="margin-left:5px">:</span> <span style="color:#2a53a8;margin:0 8px 0 18px"><span style="letter-spacing:1px">39 </span>個のプロジェクト</span>、次のフィールドでデフォルト</div>
<div class="t" style="left:1266px;top:1424.9px;font-size:28px;color:#27282c;font-weight:400;">です<span style="margin-left:4px">:</span> <span style="color:#2a53a8;margin-left:16px">1 個のフィールド</span></div>
<div class="abs btn" style="left:1266px;top:1488px;width:588px;height:44px;border:2px solid #d3d5dd;border-radius:8px;font-size:24px;color:#27282c;line-height:46px;">影響を受けるすべてのプロジェクトに対して編集</div>
<div class="abs btn" style="left:1874px;top:1488px;width:300px;height:44px;border:2px solid #d3d5dd;border-radius:8px;font-size:24px;color:#27282c;line-height:46px;">独立したコピーの作成</div>
<div class="abs btn" style="left:2194px;top:1488px;width:142px;height:44px;border:2px solid #d3d5dd;border-radius:8px;font-size:24px;color:#27282c;line-height:46px;">置換<span style="display:inline-block;width:34px"></span></div>
<svg class="abs" style="left:2285px;top:1508px" width="16.5" height="10.5" viewBox="0 0 16.5 10.5" fill="none" ><path d="M2 2 L8.25 8.5 L14.5 2" stroke="#6c7082" stroke-width="2.2" stroke-linecap="butt" stroke-linejoin="miter"/></svg>
<div class="abs" style="left:1272px;top:1590px;width:100px;height:8px;background:#db3b4b"></div>
<div class="abs" style="left:1200px;top:1598px;width:1200px;height:2px;background:#dfe1e7"></div>
</div></body></html>
